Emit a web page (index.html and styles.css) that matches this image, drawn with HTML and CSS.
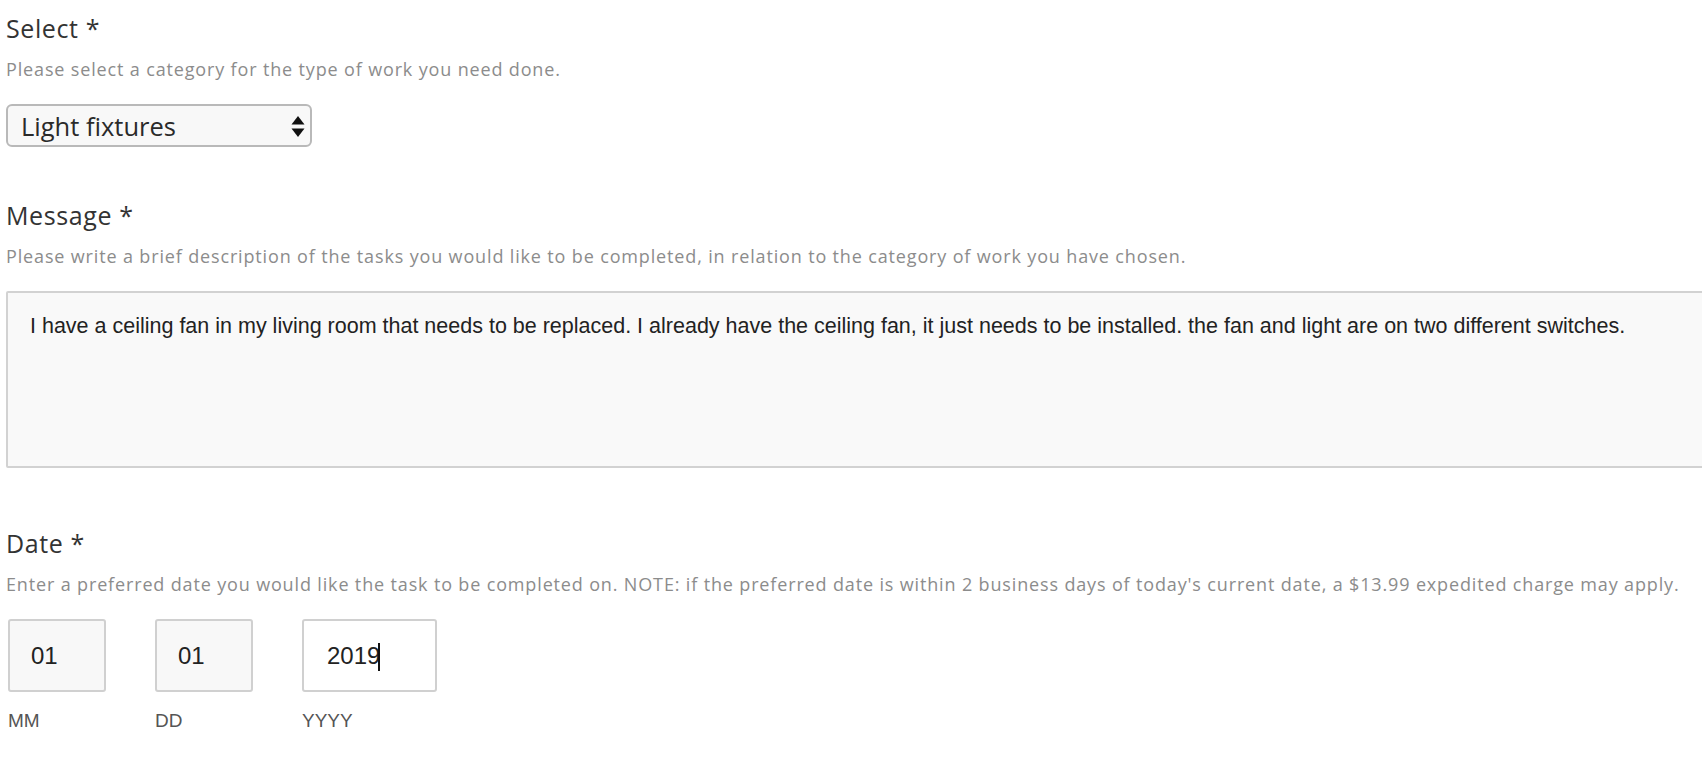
FILE: index.html
```html
<!DOCTYPE html>
<html lang="en">
<head>
<meta charset="utf-8">
<title>Request form</title>
<link rel="stylesheet" href="styles.css">
</head>
<body>
<form class="form">
  <div class="field">
    <label class="field-title" for="category">Select *</label>
    <p class="field-desc">Please select a category for the type of work you need done.</p>
    <div class="select-wrap">
      <select id="category" class="select">
        <option>Light fixtures</option>
      </select>
      <svg class="select-arrows" width="14" height="22" viewBox="0 0 14 22" aria-hidden="true">
        <path d="M7 0 L13.5 8.5 L0.5 8.5 Z" fill="#111"/>
        <path d="M0.5 12.5 L13.5 12.5 L7 21 Z" fill="#111"/>
      </svg>
    </div>
  </div>

  <div class="field field-message">
    <label class="field-title" for="message">Message *</label>
    <p class="field-desc">Please write a brief description of the tasks you would like to be completed, in relation to the category of work you have chosen.</p>
    <textarea id="message" class="textarea">I have a ceiling fan in my living room that needs to be replaced. I already have the ceiling fan, it just needs to be installed. the fan and light are on two different switches.</textarea>
  </div>

  <div class="field">
    <label class="field-title" for="mm">Date *</label>
    <p class="field-desc">Enter a preferred date you would like the task to be completed on. NOTE: if the preferred date is within 2 business days of today's current date, a $13.99 expedited charge may apply.</p>
    <div class="date-row">
      <div class="date-part">
        <input id="mm" class="date-input date-short" value="01">
        <span class="date-label">MM</span>
      </div>
      <div class="date-part">
        <input id="dd" class="date-input date-short" value="01">
        <span class="date-label">DD</span>
      </div>
      <div class="date-part">
        <div class="date-focus">
          <input id="yyyy" class="date-input date-long is-focused" value="2019">
          <span class="caret"></span>
        </div>
        <span class="date-label">YYYY</span>
      </div>
    </div>
  </div>
</form>
</body>
</html>
```

FILE: styles.css
```css
html, body {
  margin: 0;
  padding: 0;
  background: #ffffff;
  overflow: hidden;
}

.form {
  padding: 13px 0 0 6px;
  font-family: "Open Sans", Lato, sans-serif;
}

.field {
  display: flex;
  flex-direction: column;
  align-items: flex-start;
  margin-bottom: 53px;
}

.field-title {
  display: block;
  font-size: 25px;
  line-height: 30px;
  font-weight: 400;
  letter-spacing: 0.6px;
  color: #333333;
}

.field-desc {
  margin: 14px 0 23px;
  font-size: 18px;
  line-height: 24px;
  letter-spacing: 0.85px;
  color: #8c8c8c;
  white-space: nowrap;
}

.select-wrap {
  position: relative;
  width: 306px;
}

.select {
  appearance: none;
  -webkit-appearance: none;
  box-sizing: border-box;
  width: 306px;
  height: 43px;
  margin: 0;
  padding: 0 0 0 13px;
  border: 2px solid #b9b9b9;
  border-radius: 6px;
  background: #f8f8f8;
  font-family: "Open Sans", Lato, sans-serif;
  font-size: 25.5px;
  color: #2a2a2a;
  outline: none;
}

.select-arrows {
  position: absolute;
  right: 7px;
  top: 12px;
  pointer-events: none;
}

.field-message {
  margin-bottom: 60px;
}

.textarea {
  display: block;
  box-sizing: border-box;
  width: 1740px;
  height: 177px;
  margin: 0;
  padding: 18px 22px;
  border: 2px solid #d2d2d2;
  border-radius: 2px;
  background: #f9f9f9;
  font-family: "Liberation Sans", Arial, sans-serif;
  font-size: 21.5px;
  line-height: 1.4;
  color: #222222;
  resize: none;
  outline: none;
}

.date-row {
  display: flex;
  gap: 49px;
  padding-left: 2px;
}

.date-part {
  display: flex;
  flex-direction: column;
  align-items: flex-start;
}

.date-focus {
  position: relative;
}

.date-input {
  box-sizing: border-box;
  height: 73px;
  margin: 0;
  padding: 0 0 0 21px;
  border: 2px solid #d0d0d0;
  border-radius: 3px;
  background: #f8f8f8;
  font-family: "Liberation Sans", Arial, sans-serif;
  font-size: 24px;
  color: #222222;
  outline: none;
}

.date-short {
  width: 98px;
}

.date-long {
  width: 135px;
  padding-left: 23px;
}

.date-input.is-focused {
  background: #ffffff;
}

.caret {
  position: absolute;
  left: 76px;
  top: 24px;
  width: 2px;
  height: 28px;
  background: #111111;
}

.date-label {
  margin-top: 17px;
  font-family: "Liberation Sans", Arial, sans-serif;
  font-size: 19px;
  line-height: 24px;
  color: #555555;
}
```
